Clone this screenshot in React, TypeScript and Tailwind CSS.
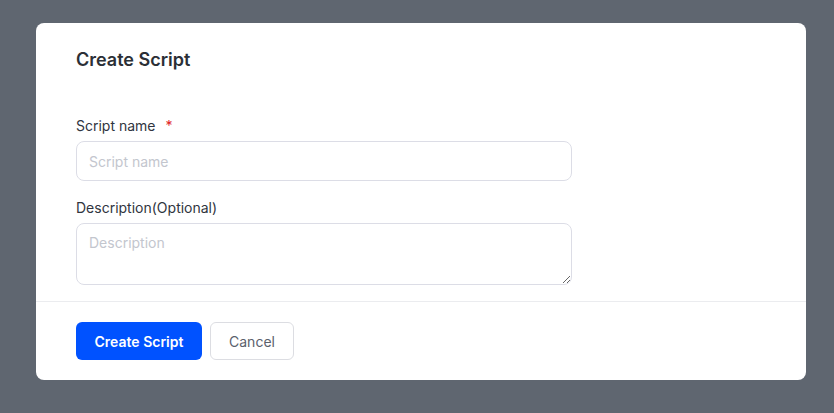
import React from "react";

export default function App() {
  return (
    <div
      className="w-[834px] h-[413px] bg-[#5f6670] pt-[23px] pl-[36px]"
      style={{ fontFamily: "Inter, 'Noto Sans', sans-serif" }}
    >
      <div className="w-[770px] h-[357px] bg-white rounded-[8px] flex flex-col overflow-hidden">
        <div className="px-[40px] pt-[23px]">
          <h2 className="text-[18px] leading-[28px] font-semibold text-[#2b2f36]">Create Script</h2>
        </div>
        <div className="px-[40px] pt-[42px] flex flex-col">
          <label className="text-[14px] leading-[20px] text-[#303540] flex items-center">
            Script name
            <span className="text-[#e02424] ml-[10px]">*</span>
          </label>
          <input
            className="mt-[5px] w-[496px] h-[40px] rounded-[8px] border border-[#dcdde6] px-[12px] text-[14px] text-[#303540] placeholder:text-[#c3c6ce] outline-none"
            placeholder="Script name"
          />
          <label className="mt-[17px] text-[14px] leading-[20px] text-[#303540]">Description(Optional)</label>
          <textarea
            className="mt-[5px] w-[496px] h-[62px] rounded-[8px] border border-[#dcdde6] px-[12px] py-[9px] text-[14px] leading-[20px] text-[#303540] placeholder:text-[#c3c6ce] outline-none"
            placeholder="Description"
          />
        </div>
        <div className="mt-[16px] border-t border-[#ebecef]" />
        <div className="px-[40px] pt-[20px] flex gap-[8px]">
          <button className="h-[38px] w-[126px] rounded-[6px] bg-[#0052ff] text-white text-[14px] font-semibold">
            Create Script
          </button>
          <button className="h-[38px] w-[84px] rounded-[6px] border border-[#dcdde2] bg-white text-[#5b616c] text-[14px] font-normal">
            Cancel
          </button>
        </div>
      </div>
    </div>
  );
}
